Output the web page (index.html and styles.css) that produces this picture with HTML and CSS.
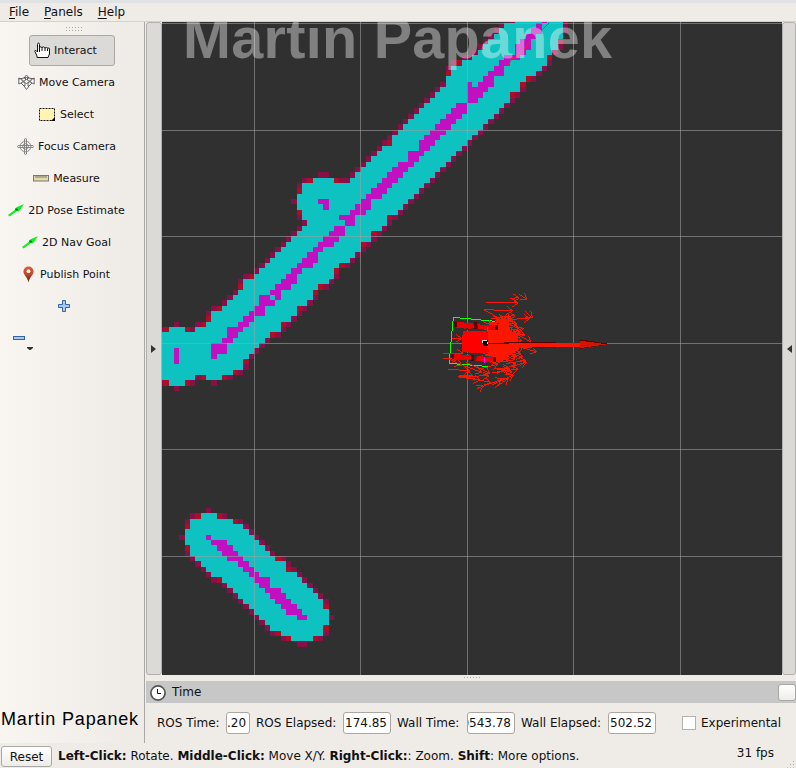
FILE: index.html
```html
<!DOCTYPE html>
<html lang="en">
<head>
<meta charset="utf-8">
<title>RViz</title>
<link rel="stylesheet" href="styles.css">
</head>
<body>
<div class="app">
  <nav class="menubar"><span><u>F</u>ile</span><span><u>P</u>anels</span><span><u>H</u>elp</span></nav>
  <div class="main">
    <aside class="tools">
      <div class="grip tools-grip"></div>
      <div class="tool active"><svg width="17" height="17" viewBox="0 0 17 17"><path d="M5.500 10V2.500Q5.500 1 4.500 1T3.500 2.500V10L2 8.500Q1 8 .8 9.200L3 14V15.500H14L15.500 12V6.500Q15.300 5.500 14 6.300L12.500 5.500 11 6 9.300 4.800 8 5.500 5.500 4.500M8 5.500V9M11 6V9M13.500 6.500V9" fill="#fff" stroke="#111"/></svg><span>Interact</span></div>
      <div class="tool"><svg width="17" height="17" viewBox="0 0 17 17"><g fill="#fff" stroke="#555" stroke-width=".9"><path d="M8.500 1 11 4H9.500V7H13V5.500L16.200 4V10L13 8.500V8H10V12H11L8.500 15.500 6 12H7V8H4V8.500L.8 10V4L4 5.500V7H7.500V4H6Z"/><path d="M1 5Q8.500 2 16 5M3 9 7 13M14 9 10 13" fill="none"/><path d="M8.500 5 11 7.500 8.500 10 6 7.500Z"/></g></svg><span>Move Camera</span></div>
      <div class="tool"><svg width="17" height="15" viewBox="0 0 17 15"><rect x=".5" y="1.500" width="15" height="12" fill="#fff5b0" stroke="#111" stroke-dasharray="2 1"/><path d="M16 10V14H12Z"/></svg><span>Select</span></div>
      <div class="tool"><svg width="17" height="17" viewBox="0 0 17 17"><g fill="none" stroke="#858585"><circle cx="8.500" cy="8.500" r="5.300"/><circle cx="8.500" cy="8.500" r="2.800"/><path d="M7.500 1Q8.500 0 9.500 1V16Q8.500 17 7.500 16ZM1 7.500Q0 8.500 1 9.500H16Q17 8.500 16 7.500Z"/></g></svg><span>Focus Camera</span></div>
      <div class="tool"><svg width="16" height="7" viewBox="0 0 16 7"><rect x=".5" y=".5" width="15" height="5.500" fill="#e5dba8" stroke="#777"/><path d="M3 1V3M5 1V3M7 1V3M9 1V3M11 1V3M13 1V3" stroke="#777"/></svg><span>Measure</span></div>
      <div class="tool"><svg width="16" height="13" viewBox="0 0 16 13"><path d="M0 11 8 5V3.500L16 0 12 6 10.500 7.500 9 7 1.500 12.500Z" fill="#0cf21f"/><path d="M7.500 4 10 5 9.500 7 7 6Z" fill="#087916"/></svg><span>2D Pose Estimate</span></div>
      <div class="tool"><svg width="16" height="13" viewBox="0 0 16 13"><path d="M0 11 8 5V3.500L16 0 12 6 10.500 7.500 9 7 1.500 12.500Z" fill="#0cf21f"/><path d="M7.500 4 10 5 9.500 7 7 6Z" fill="#087916"/></svg><span>2D Nav Goal</span></div>
      <div class="tool pin"><svg width="11" height="17" viewBox="0 0 11 17"><defs><linearGradient id="pin" x2="0" y2="1"><stop stop-color="#e75434"/><stop offset=".45" stop-color="#c44b2d"/><stop offset="1" stop-color="#42250f"/></linearGradient></defs><path d="M5.500 16.500C4.500 11 .4 9 .4 5.500A5.100 5.100 0 0 1 10.600 5.500C10.600 9 6.500 11 5.500 16.500Z" fill="url(#pin)"/><circle cx="5.500" cy="5.200" r="1.900" fill="#fff"/></svg><span>Publish Point</span></div>
      <div class="tool plus"><svg width="12" height="12" viewBox="0 0 12 12"><path d="M4.500.5H7.500V4.500H11.500V7.500H7.500V11.500H4.500V7.500H.5V4.500H4.500Z" fill="#a9c8ea" stroke="#3465a4"/></svg></div>
      <div class="minus"><svg width="22" height="16" viewBox="0 0 22 16"><rect x=".5" y=".5" width="11" height="3" fill="#a9c8ea" stroke="#3465a4"/><path d="M14 11H20V12L17.500 14H16.500L14 12Z" fill="#333"/></svg></div>
      <div class="author">Martin Papanek</div>
    </aside>
    <section class="content">
      <div class="viewport">
        <div class="handle"><i class="arrow right"></i></div>
        <svg class="scene" viewBox="162 22 620 653">
          <g id="costmap" shape-rendering="crispEdges"></g>
          <path class="grid" d="M254.500 22V675M360.500 22V675M467.500 22V675M573.500 22V675M680.500 22V675M162 23.500H782M162 130.500H782M162 236.500H782M162 343.500H782M162 449.500H782M162 556.500H782"/>
          <path class="scan" d="M508 65 512 59 516 57 521 51 526 47 530 41M538 34 544 28 549 23"/>
          <g transform="translate(430 285) scale(.33333)" shape-rendering="crispEdges">
            <path class="outline" d="M70 97 195 109M70 97 57 235 180 245M205 122V142"/>
            <path d="M174 140 205 132 206 112 235 108 240 135 262 150 266 195 240 205 232 222 205 232 196 225 180 205Z" fill="#f91700"/>
            <g id="particles"></g>
            <path d="M72 112 128 113 133 128 116 132 72 127Z" fill="#e60000"/>
            <path d="M142 118 203 122V136L145 132ZM65 208 124 209 130 224 67 224ZM137 213 198 217V231L140 229Z" fill="#ec0000"/>
            <path d="M108 132 170 137M105 205 165 210M130 122H145M130 216H140" stroke="#303030" stroke-width="4"/>
            <path d="M132 112H141V132H132ZM194 121H204V135H194ZM124 209H132V228H124ZM190 216H197V231H190ZM72 112H82V125H72ZM65 208H73V221H65Z" fill="#590000"/>
            <path d="M98 138 172 139 176 200 172 204 96 202Z" fill="#f00"/>
            <path d="M172 173 378 171V188L172 190Z" fill="#500"/>
            <path d="M172 178 200 176 450 173V186L172 189Z" fill="#f91700"/>
            <path d="M450 163 540 177 450 192Z" fill="#600"/><path d="M450 167 532 178 450 189Z" fill="#d41300"/>
            <path d="M170 125H174V138H170ZM162 215H166V234H162Z" fill="#f0f"/>
            <path d="M160 165H174V184H160Z" fill="#000"/><path d="M157 166H170V169H160V174H157ZM171 170H174V178H171Z" fill="#ddd"/>
          </g>
          <text class="watermark" x="183" y="58" textLength="429">Martin Papanek</text>
        </svg>
        <div class="handle"><i class="arrow left"></i></div>
      </div>
      <div class="dock-sep"><i class="grip"></i></div>
      <header class="dock-title"><svg width="16" height="16" viewBox="0 0 16 16"><circle cx="8" cy="8" r="7.100" fill="#fff" stroke="#555" stroke-width="1.700"/><path d="M7.500 4V8.500H11" fill="none" stroke="#111"/></svg><span>Time</span><i class="close"></i></header>
      <div class="clock">
        <label class="l1">ROS Time:</label><div class="field f1">.20</div>
        <label class="l2">ROS Elapsed:</label><div class="field">174.85</div>
        <label class="l3">Wall Time:</label><div class="field f3"><span>0543.78</span></div>
        <label class="l4">Wall Elapsed:</label><div class="field">502.52</div>
        <i class="check"></i><label>Experimental</label>
      </div>
    </section>
  </div>
  <footer class="status"><div class="reset">Reset</div><div class="help"><b>Left-Click:</b> Rotate. <b>Middle-Click:</b> Move X/Y. <b>Right-Click:</b>: Zoom. <b>Shift</b>: More options.</div><div class="fps">31 fps</div><i class="sizegrip"></i></footer>
</div>
<script src="scene.js"></script>
</body>
</html>
```
FILE: styles.css
```css
* { box-sizing: border-box; }
body { margin: 0; background: #efebe7; color: #111; font: 12px/16px "DejaVu Sans", sans-serif; }
.app { width: 796px; height: 768px; display: flex; flex-direction: column; overflow: hidden; }
.menubar { height: 22px; flex: none; border-top: 3px solid #e1e2e3; border-bottom: 1px solid #d5d1cd; display: flex; gap: 15px; padding: 1px 9px 0; }
.menubar u { text-underline-offset: 2px; }
.main { height: 721px; flex: none; display: flex; }
.tools { width: 145px; flex: none; border-right: 1px solid #aaa7a4; display: flex; flex-direction: column; background: linear-gradient(90deg, #f9f6f1, #efece8 90%); font-size: 11px; }
.grip { display: block; width: 17px; height: 4px; background: radial-gradient(circle, #aaa6a2 .7px, transparent 1px) 0 0 / 3px 3px; }
.tools-grip { height: 6px; margin: 4px 0 2px 65px; }
.tool { height: 32px; flex: none; width: 133px; display: flex; align-items: center; justify-content: center; gap: 4px; white-space: nowrap; }
.tool span { padding-top: 1px; }
.tool.active { width: 86px; height: 31px; margin: 1px 0 0 29px; border: 1px solid #aaa8a5; border-radius: 3px; background: #dbdad6; justify-content: flex-start; padding-left: 4px; gap: 3px; }
.tool.pin { gap: 6px; }
.tool.plus { width: 128px; }
.minus { margin: 14px 0 0 13px; height: 16px; }
.minus svg { display: block; }
.author { margin-top: auto; padding: 0 0 13px 1px; font: 18px/22px "Liberation Sans", sans-serif; letter-spacing: .85px; color: #000; white-space: nowrap; }
.content { width: 651px; flex: none; display: flex; flex-direction: column; padding-left: 1px; }
.viewport { height: 653px; display: flex; }
.handle { width: 16px; flex: none; border: 1px solid #b2afac; border-radius: 3px; background: #dbdad6; display: flex; align-items: center; justify-content: center; }
.handle:last-child { width: 14px; }
.scene { width: 620px; height: 653px; flex: none; background: #303030; overflow: hidden; }
.arrow { border: 4px solid transparent; }
.arrow.right { border-left: 5px solid #333; border-right: 0; margin-right: 1px; }
.arrow.left { border-right: 5px solid #333; border-left: 0; }
.grid { fill: none; stroke: #a0a0a4; stroke-opacity: .58; }
.scan { fill: none; stroke: #ff2020; stroke-width: 1; }
.outline { fill: none; stroke: #18ff00; stroke-width: 3; }
.ray { fill: none; stroke: #f91700; stroke-width: 3; }
.watermark { font: bold 57.5px "Liberation Sans", sans-serif; fill: #fff; fill-opacity: .39; }
.dock-sep { height: 6px; display: flex; padding: 1px 0 0 317px; }
.dock-title { height: 22px; background: #c7c7c7; display: flex; align-items: center; padding-left: 4px; gap: 6px; }
.dock-title svg { margin-top: 2px; }
.close { width: 18px; height: 17px; margin: 0 0 0 auto; border: 1px solid #aaa8a5; border-radius: 3px; background: linear-gradient(#fff, #efedea); }
.clock { height: 40px; display: flex; align-items: center; padding-left: 11px; white-space: nowrap; }
.l1 { width: 69px; } .l2 { width: 87px; } .l3 { width: 70px; } .l4 { width: 87px; }
.field { width: 48px; height: 22px; margin-right: 6px; border: 1px solid #aaa6a2; border-radius: 3px; background: #fff; padding: 2px 0 0 1px; color: #111; overflow: hidden; }
.f1 { width: 24px; padding-left: 0; }
.f3 { display: flex; justify-content: flex-end; padding-right: 3px; }
.check { width: 14px; height: 14px; border: 1px solid #b4b0ac; background: #fff; margin: 0 5px 0 20px; }
.status { height: 25px; display: flex; align-items: center; padding-left: 1px; white-space: nowrap; }
.reset { width: 51px; height: 21px; margin-top: 2px; border: 1px solid #aaa8a5; border-radius: 3px; background: linear-gradient(#fff, #eeece9); text-align: center; padding-top: 2px; }
.help { margin-left: 6px; width: 679px; }
.fps { padding-bottom: 6px; }
.sizegrip { width: 10px; height: 11px; margin: 13px 0 0 12px; background: radial-gradient(circle, #aaa 0.7px, transparent 1px) 0 0 / 3px 3px; clip-path: polygon(100% 0, 100% 100%, 0 100%); }
```
FILE: scene.js
```js
// Costmap rows: c = inflated, m = obstacle, p / r = outer rim cells.
const rows = `
-1:p65 c66-74 p75 m71
0:p63 c64-74 p75 m70
1:p62 c63-74 p75 m69-70
2:p61 c62-74 m68-69
3:p60 c61-73 r74 m67-68
4:p59 c60-73 p74 m66-68
5:p58 c59-72 p73 m66-67
6:p56-57 c58-71 r72 m64-66
7:p54 r55 c56-71 p72 m63-64
8:p53 c54-70 p71 m62-63
9:r53 c54-69 p70 m61-63
10:c53-67 r68 p69 m60-61
11:p52 c53-66 r67 m57 m59-61
12:p51 c52-66 p67 m57-60
13:p50 c51-64 r65 p66 m57-59
14:p49 c50-64 p65 m57-58
15:p48 c49-63 p64 m55-56
16:p47 c48-62 p63 m54-56
17:p46 c47-61 p62 m53-55
18:p45 c46-60 p61 m52-54
19:p44 c45-59 p60 m51-53
20:p43 c44-58 p59 m50-52
21:p42 c43-57 p58 m49-51
22:p41 r42 c43-56 p57 m48-50
23:p40 c41-55 p56 m48-49
24:p39 c40-54 p55 m46-48
25:p38 c39-53 p54 m46-47
26:p37 c38-52 p53 m44-46
27:p36 c37-51 p52 m43-45
28:p29-30 p35 c36-50 p51 m42-44
29:p26 r27 c28-31 r32 p33-34 c35-49 p50 m41-43
30:p25 c26-48 p49 m40-42
31:r25 c26-47 p48 m39-41
32:c25-46 p47 m38-40
33:p24 c25-45 p46 m29-30 m37-38
34:c25-44 p45 m30 m36-38
35:r25 c26-43 p44 m35-37
36:p25 c26-41 r42 p43 m33-35
37:p26 c27-41 p42 m34-35
38:p25 c26-40 p41 m32-33
39:p24 c25-38 r39 p40 m31-33
40:p23 c24-38 p39 m30-32
41:p22 c23-36 r37 p38 m29-31
42:p21 c22-36 p37 m28-29
43:p20 c21-35 p36 m27-28
44:p19 c20-34 p35 m26-28
45:p18 c19-32 r33 p34 m25-27
46:p17 c18-31 r32 m24-25
47:p15 r16 c17-31 p32 m23-24
48:p14 c15-30 p31 m22-24
49:r14 c15-28 r29 p30 m21-23
50:p13 c14-27 r28 m20-21
51:p12 c13-27 p28 m18-19 m21
52:p11 c12-26 p27 m18-20
53:p9 r10 c11-24 r25 p26 m17-18
54:p8 c9-24 p25 m16-18
55:r8 c9-23 p24 m15-16
56:p2 p6 r7 c8-21 r22 p23 m14-15
57:p-1 r0 c1-3 r4 p5 c6-21 p22 m12-14
58:c-1-19 r20 p21 m12-13
59:c-1-18 p19 m11-12
60:c-1-17 p18 m9-11
61:c-1-16 p17 m9-11 m2
62:c-1-15 p16 m9 m2
63:c-1-14 r15 m2
64:c-1-14 p15
65:c-1-12 r13 p14
66:c-1-5 p6 r7 c8-10 r11 p12
67:p-1 r0 c1-3 r4 p5 p9
68:p2
91:p8
92:p5 r6 c7-9 r10 p11
93:p4 c5-12 r13 p14
94:r4 c5-14 p15
95:c4-15 p16
96:p3 c4-16 p17 m8
97:c4-17 p18 m9-11
98:r4 c5-18 p19 m10-12
99:p4 c5-19 p20 m11-13
100:p5 c6-20 r21 p22 m12-14
101:p6 c7-22 p23 m14-15
102:p7 c8-22 r23 p24 m15-16
103:p8 c9-24 p25 m16-17
104:p9 r10 c11-25 p26 m17-19
105:p11 c12-26 p27 m18-19
106:p12 c13-27 p28 m19-21
107:p13 c14-28 p29 m20-22
108:p14 c15-29 p30 m21-23
109:p15 c16-29 r30 m22-24
110:p16 c17-30 m23-25
111:p17 c18-30 p31 m25-26
112:p18 c19-30
113:p19 c20-29 r30
114:p20 r21 c22-29 p30
115:p22 r23 c24-27 r28 p29
116:p25-26`;
const colors = { c: '#0fc2c2', m: '#c20fc2', p: '#880f47', r: '#ad0d25' };
const px = c => Math.round(163.3 + 5.33 * c);
const py = r => Math.round(23.1 + 5.33 * r);
let cells = '';
for (const line of rows.trim().split('\n')) {
  const at = line.indexOf(':');
  const r = +line.slice(0, at);
  for (const run of line.slice(at + 1).split(' ')) {
    const [, kind, a, b] = run.match(/^(\w)(-?\d+)(?:-(\d+))?$/);
    const x = px(+a), y = py(r), end = px(+(b ?? a) + 1);
    cells += `<rect x="${x}" y="${y}" width="${end - x}" height="${py(r + 1) - y}" fill="${colors[kind]}"/>`;
  }
}
document.getElementById('costmap').innerHTML = cells;

// Pose arrows: tip x, tip y, length, heading in degrees.
const poses = [[292,43,28,30],[265,54,98,0],[248,77,85,2],[308,99,30,40],[256,92,60,-5],[320,200,45,15],[304,172,40,30],[287,226,60,-10],[265,252,80,-8],[182,292,95,12],[177,272,92,-2],[216,283,80,-20],[95,240,42,25],[120,258,65,5],[160,302,20,-30],[100,205,60,0],[85,220,45,0],[95,160,30,0],[150,285,65,8],[250,270,70,-25],[268,38,28,-5],[235,280,50,-35],[300,100,80,-3],[280,130,60,-20],[284,150,60,10],[278,215,50,10],[262,118,60,5],[290,232,60,-15],[180,265,80,25],[155,262,60,20],[130,272,42,2]];
let seed = 7;
const rnd = () => (seed = (seed * 16807) % 2147483647) / 2147483647;
for (let i = 0; i < 70; i++) {
  const t = rnd() * Math.PI * 2, d = Math.sqrt(rnd());
  poses.push([225 + Math.cos(t) * d * 58, 184 + Math.sin(t) * d * 84, 30 + rnd() * 40, rnd() * 60 - 30]);
}
document.getElementById('particles').innerHTML = poses.map(([x, y, l, deg]) => {
  const a = deg * Math.PI / 180;
  const p = (k, len) => `${(x - Math.cos(k) * len).toFixed(1)} ${(y - Math.sin(k) * len).toFixed(1)}`;
  return `<path class="ray" d="M${p(a, l)}L${x.toFixed(1)} ${y.toFixed(1)}M${p(a + .6, 22)}L${x.toFixed(1)} ${y.toFixed(1)}L${p(a - .6, 22)}"/>`;
}).join('');
```
